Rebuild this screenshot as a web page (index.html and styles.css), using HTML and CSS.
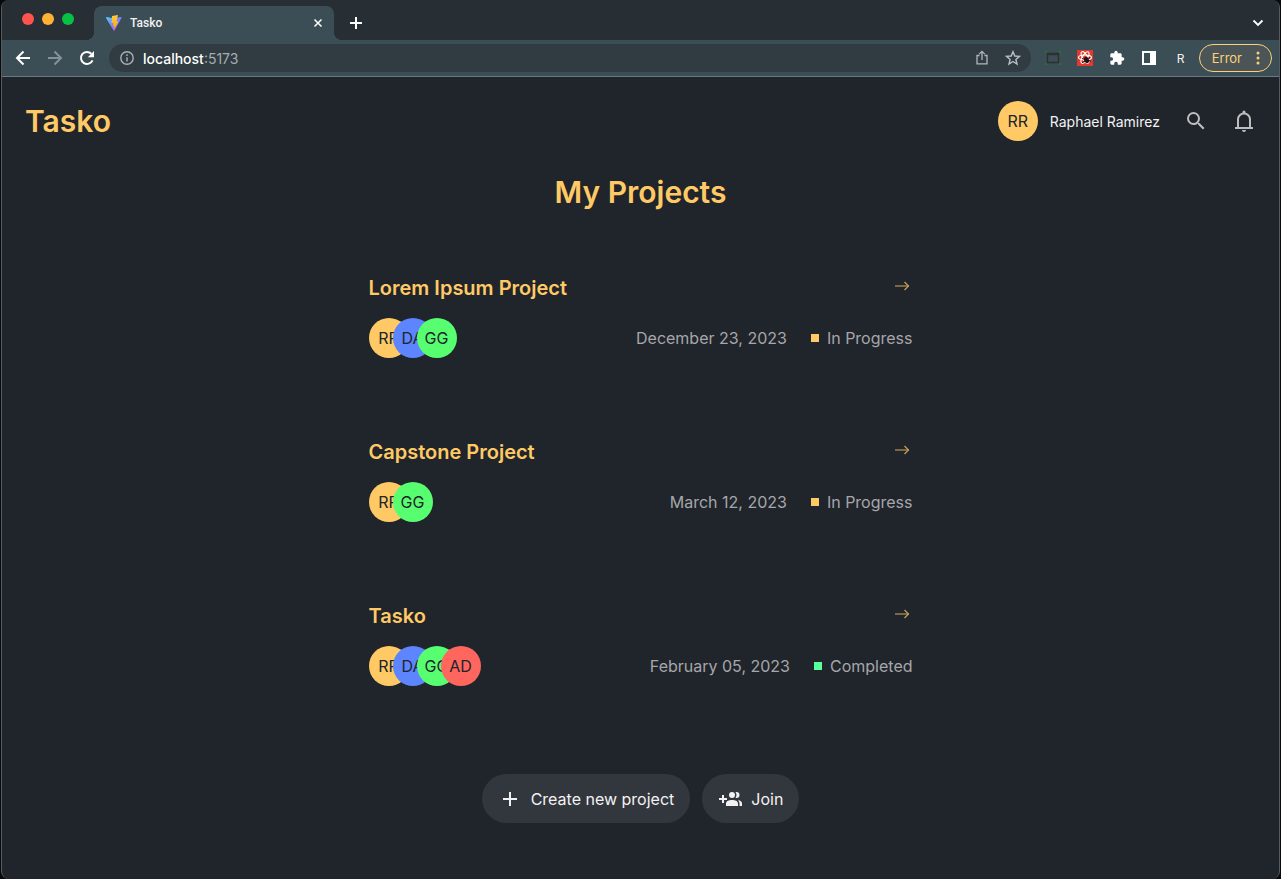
FILE: index.html
```html
<!DOCTYPE html>
<html lang="en">
<head>
<meta charset="utf-8">
<title>Tasko</title>
<link rel="stylesheet" href="styles.css">
</head>
<body>
<div class="window">
  <div class="tabstrip">
    <div class="lights"><span class="light red"></span><span class="light amber"></span><span class="light green"></span></div>
    <div class="tab">
      <svg class="favicon" width="16" height="16" viewBox="0 0 32 32" aria-hidden="true">
        <defs>
          <linearGradient id="v" x1="0" y1="0" x2="1" y2="1"><stop offset="0" stop-color="#41d1ff"/><stop offset="1" stop-color="#bd34fe"/></linearGradient>
          <linearGradient id="b" x1="0" y1="0" x2="0" y2="1"><stop offset="0" stop-color="#ffc940"/><stop offset="1" stop-color="#ffa800"/></linearGradient>
        </defs>
        <path fill="url(#v)" d="M31 6 17 31q-1 1-2 0L0 6q0-2 2-2l14 3 13-3q3 0 2 2z"/>
        <path fill="url(#b)" d="M24 0 12 2l-1 14h4l-1 7 3-1-1 8 9-17h-4z"/>
      </svg>
      <span class="tab-title">Tasko</span>
      <button class="plain" aria-label="Close tab"><svg width="10" height="10" viewBox="0 0 10 10"><path d="m1.500 1.500 7 7m0-7-7 7" stroke="#fff" stroke-width="1.500"/></svg></button>
    </div>
    <button class="plain newtab" aria-label="New tab"><svg width="12" height="12" viewBox="0 0 12 12"><path d="M6 0v12M0 6h12" stroke="#fff" stroke-width="2"/></svg></button>
    <button class="plain tabsearch" aria-label="Search tabs"><svg width="12" height="8" viewBox="0 0 12 8"><path d="m1.500 1.500 4.500 4.500 4.500-4.500" fill="none" stroke="#fff" stroke-width="1.800"/></svg></button>
  </div>
  <div class="toolbar">
    <div class="nav">
      <button class="plain" aria-label="Back"><svg width="16" height="16" viewBox="0 0 16 16" fill="none" stroke="#fff" stroke-width="2"><path d="M15 8H2.500M8.500 1.500 2 8l6.500 6.500"/></svg></button>
      <button class="plain" aria-label="Forward"><svg width="16" height="16" viewBox="0 0 16 16" fill="none" stroke="#84919a" stroke-width="2"><path d="M1 8h12.500M7.500 1.500 14 8l-6.500 6.500"/></svg></button>
      <button class="plain" aria-label="Reload"><svg width="16" height="16" viewBox="0 0 16 16"><path d="M13.500 10.300A6 6 0 1 1 12.300 3.800" fill="none" stroke="#fff" stroke-width="2"/><path d="M15 1v6.200H8.800z" fill="#fff"/></svg></button>
    </div>
    <div class="address">
      <svg width="14" height="14" viewBox="0 0 14 14" fill="none" stroke="#aab1b5" stroke-width="1.400"><circle cx="7" cy="7" r="6.200"/><path d="M7 6.200v4.300M7 3.300v1.600"/></svg>
      <span class="url"><span class="host">localhost</span>:5173</span>
      <button class="plain" aria-label="Share"><svg width="14" height="16" viewBox="0 0 14 16" fill="none" stroke="#b0b6b9" stroke-width="1.300"><path d="M4.500 5.500H2v8.300h10V5.500H9.500M7 10V1.500M4.200 4.100 7 1.300l2.800 2.800"/></svg></button>
      <button class="plain" aria-label="Bookmark"><svg width="16" height="16" viewBox="0 0 16 16" fill="none" stroke="#b9bfc2" stroke-width="1.400"><path d="m8 1.700 1.800 4.300 4.700.4-3.600 3 1.100 4.600-4-2.500L4 14l1.100-4.600-3.600-3 4.700-.4z"/></svg></button>
    </div>
    <div class="extensions">
      <svg width="16" height="16" viewBox="0 0 16 16" fill="none"><path d="M2.500 3.500h11v9h-11zM2.500 4.500h11" stroke="#2b3033" stroke-width="1.400"/><path fill="#1d7a22" d="M0 1h3L0 4zM16 1v3l-3-3zM0 15v-3l3 3zM16 15h-3l3-3z"/></svg>
      <svg width="16" height="16" viewBox="0 0 16 16"><path fill="#e0392f" d="M0 0h16v16H0z"/><g fill="none" stroke="#fff" stroke-width="1.100"><ellipse cx="8" cy="7.500" rx="6.500" ry="2.500"/><ellipse cx="8" cy="7.500" rx="6.500" ry="2.500" transform="rotate(60 8 7.500)"/><ellipse cx="8" cy="7.500" rx="6.500" ry="2.500" transform="rotate(120 8 7.500)"/></g><ellipse cx="9.500" cy="10" rx="2.400" ry="3.200" fill="#241313" transform="rotate(-25 9.500 10)"/><path d="m5 8.500 3 1m-3 3 3-1m5-4-2 1m3 3-2-1" stroke="#241313"/></svg>
      <svg width="16" height="16" viewBox="0 0 24 24"><path fill="#fff" d="M20.500 11H19V7c0-1.100-.9-2-2-2h-4V3.500a2.500 2.500 0 0 0-5 0V5H4c-1.100 0-2 .9-2 2v3.800h1.500a2.700 2.700 0 0 1 0 5.400H2V20c0 1.100.9 2 2 2h3.800v-1.500a2.700 2.700 0 0 1 5.400 0V22H17c1.100 0 2-.9 2-2v-4h1.500a2.500 2.500 0 0 0 0-5z"/></svg>
      <svg width="16" height="16" viewBox="0 0 16 16"><path fill="#fff" fill-rule="evenodd" d="M1 1h14v14H1zM3 3v10h6V3z"/></svg>
      <span class="profile">R</span>
      <button class="error">Error<svg width="4" height="14" viewBox="0 0 4 14" fill="#fdd077"><circle cx="2" cy="2" r="1.500"/><circle cx="2" cy="7" r="1.500"/><circle cx="2" cy="12" r="1.500"/></svg></button>
    </div>
  </div>

  <div class="page">
    <header class="header">
      <a class="brand" href="#">Tasko</a>
      <div class="user">
        <div class="who"><span class="avatar yellow">RR</span><span>Raphael Ramirez</span></div>
        <button class="plain" aria-label="Search"><svg width="24" height="24" viewBox="0 0 24 24"><path fill="#bdbebf" d="M15.500 14h-.79l-.28-.27A6.470 6.470 0 0 0 16 9.500 6.500 6.500 0 1 0 9.500 16c1.610 0 3.090-.59 4.230-1.570l.27.28v.79l5 4.990L20.490 19zm-6 0C7.010 14 5 11.990 5 9.500S7.010 5 9.500 5 14 7.010 14 9.500 11.990 14 9.500 14z"/></svg></button>
        <button class="plain" aria-label="Notifications"><svg width="24" height="24" viewBox="0 0 24 24"><path d="M6 19v-8.500a6 6 0 0 1 12 0V19M3 19h18" fill="none" stroke="#bdbebf" stroke-width="2"/><path fill="#bdbebf" d="M10.500 4V3a1.500 1.500 0 0 1 3 0v1zM10 21h4a2 2 0 0 1-4 0z"/></svg></button>
      </div>
    </header>
    <main class="main">
      <h1 class="title">My Projects</h1>
      <div class="projects">
        <article class="project">
          <div class="row"><h2>Lorem Ipsum Project</h2><a class="arrow" href="#" aria-label="Open Lorem Ipsum Project"><svg width="16" height="10" viewBox="0 0 16 10" fill="none"><path d="M1 5h14" stroke="#a8874d" stroke-width="1.400"/><path d="m10.500 1 4 4-4 4" stroke="#c79e57" stroke-width="1.200"/></svg></a></div>
          <div class="row"><div class="team"><span class="avatar yellow">RR</span><span class="avatar blue">DA</span><span class="avatar lime">GG</span></div><div class="meta"><time>December 23, 2023</time><span class="status">In Progress</span></div></div>
        </article>
        <article class="project">
          <div class="row"><h2>Capstone Project</h2><a class="arrow" href="#" aria-label="Open Capstone Project"><svg width="16" height="10" viewBox="0 0 16 10" fill="none"><path d="M1 5h14" stroke="#a8874d" stroke-width="1.400"/><path d="m10.500 1 4 4-4 4" stroke="#c79e57" stroke-width="1.200"/></svg></a></div>
          <div class="row"><div class="team"><span class="avatar yellow">RR</span><span class="avatar lime">GG</span></div><div class="meta"><time>March 12, 2023</time><span class="status">In Progress</span></div></div>
        </article>
        <article class="project">
          <div class="row"><h2>Tasko</h2><a class="arrow" href="#" aria-label="Open Tasko"><svg width="16" height="10" viewBox="0 0 16 10" fill="none"><path d="M1 5h14" stroke="#a8874d" stroke-width="1.400"/><path d="m10.500 1 4 4-4 4" stroke="#c79e57" stroke-width="1.200"/></svg></a></div>
          <div class="row"><div class="team"><span class="avatar yellow">RR</span><span class="avatar blue">DA</span><span class="avatar lime">GG</span><span class="avatar coral">AD</span></div><div class="meta"><time>February 05, 2023</time><span class="status done">Completed</span></div></div>
        </article>
      </div>
      <div class="actions">
        <button class="pill"><svg width="24" height="24" viewBox="0 0 24 24"><path d="M12 5v14M5 12h14" stroke="#f2f2f3" stroke-width="2"/></svg>Create new project</button>
        <button class="pill"><svg width="24" height="24" viewBox="0 0 24 24" fill="#f2f2f3"><path d="M4 8h2v3h3v2H6v3H4v-3H1v-2h3z"/><circle cx="14" cy="8" r="3"/><path d="M8 19v-2.500C8 14 11 13 14 13s6 1 6 3.500V19zM17.500 11q2-3 0-6 4-.5 4 3t-4 3zM21.500 19v-2.500q0-2-1.500-3.200c2.500.3 4 1.300 4 3.200V19z"/></svg>Join</button>
      </div>
    </main>
  </div>
</div>
</body>
</html>
```

FILE: styles.css
```css
* { box-sizing: border-box; }
body { margin: 0; background: #08090b; font-family: Inter, "Liberation Sans", sans-serif; color: #f2f2f3; }
h1, h2 { margin: 0; font-weight: 600; color: #ffca66; }
a { color: inherit; text-decoration: none; }
button { font: inherit; color: inherit; cursor: pointer; }
svg { display: block; flex: none; }
.plain { display: flex; padding: 0; border: 0; background: none; }
.window { display: flex; flex-direction: column; min-height: 100vh; margin: 0 1px; border: solid #565c61; border-width: 0 1px; border-radius: 8px; overflow: hidden; background: #20242b; }

.tabstrip { display: flex; align-items: center; height: 40px; padding: 0 15px 0 20px; background: #282f34; }
.lights { display: flex; gap: 8px; padding-bottom: 2px; }
.light { width: 12px; height: 12px; border-radius: 50%; }
.red { background: #ff534e; }
.amber { background: #ffb136; }
.green { background: #05c144; }
.tab { position: relative; display: flex; align-items: center; align-self: flex-end; gap: 8px; width: 240px; height: 34px; margin-left: 20px; padding: 0 11px 0 12px; border-radius: 8px 8px 0 0; background: #3c4e55; font-size: 12px; }
.tab::before, .tab::after { content: ""; position: absolute; bottom: 0; width: 8px; height: 8px; }
.tab::before { right: 100%; background: radial-gradient(circle at 0 0, transparent 8px, #3c4e55 8px); }
.tab::after { left: 100%; background: radial-gradient(circle at 100% 0, transparent 8px, #3c4e55 8px); }
.tab-title { flex: 1; font-family: Roboto, sans-serif; font-weight: 500; }
.newtab { margin: 6px 0 0 16px; }
.tabsearch { margin: 6px 0 0 auto; }
.toolbar { display: flex; align-items: center; height: 37px; padding: 0 7px 0 13px; border-bottom: 1px solid #6b7a80; background: #3c4e55; }
.nav { display: flex; gap: 16px; }
.address { display: flex; flex: 1; align-items: center; gap: 16px; height: 28px; margin: 0 14px; padding: 0 10px 0 11px; border-radius: 14px; background: #303c41; }
.url { flex: 1; margin-left: -7px; font-size: 14px; color: #a5adb0; }
.host { color: #fff; font-weight: 500; }
.extensions { display: flex; align-items: center; gap: 16px; }
.profile { width: 16px; font-size: 12px; text-align: center; }
.error { display: flex; align-items: center; gap: 14px; height: 28px; margin-left: -6px; padding: 0 11px 0 12px; border: 1px solid #fdd077; border-radius: 14px; background: #4b5557; color: #fdd077; font-size: 13px; }

.header { display: flex; align-items: center; justify-content: space-between; padding: 24px 23px; }
.brand { font-size: 30px; line-height: 40px; font-weight: 600; color: #ffca66; }
.user { display: flex; align-items: center; gap: 24px; }
.who { display: flex; align-items: center; gap: 12px; font-size: 14px; }
.avatar { display: flex; align-items: center; justify-content: center; width: 40px; height: 40px; border-radius: 50%; font-size: 16px; color: #20242b; }
.yellow { background: #ffca66; }
.blue { background: #5c85ff; }
.lime { background: #57ff70; }
.coral { background: #ff665e; }
.main { display: flex; flex-direction: column; align-items: center; padding: 7px 24px 54px; }
.title { font-size: 30px; line-height: 40px; }
.projects { display: flex; flex-direction: column; gap: 80px; width: 100%; max-width: 544px; margin-top: 62px; }
.project { display: flex; flex-direction: column; gap: 16px; }
.row { display: flex; align-items: center; justify-content: space-between; }
.row h2 { font-size: 20px; line-height: 28px; }
.arrow { padding: 0 3px 4px; }
.team { display: flex; }
.team .avatar + .avatar { margin-left: -16px; }
.meta { display: flex; align-items: center; gap: 24px; font-size: 16px; color: #a6a7aa; }
.status { display: flex; align-items: center; gap: 8px; }
.status::before { content: ""; width: 8px; height: 8px; background: #ffca66; }
.done::before { background: #57ff9d; }
.actions { display: flex; gap: 12px; margin-top: 88px; }
.pill { display: flex; align-items: center; gap: 9px; height: 49px; padding: 0 16px; border: 0; border-radius: 25px; background: #32363d; font-size: 16px; }
```
